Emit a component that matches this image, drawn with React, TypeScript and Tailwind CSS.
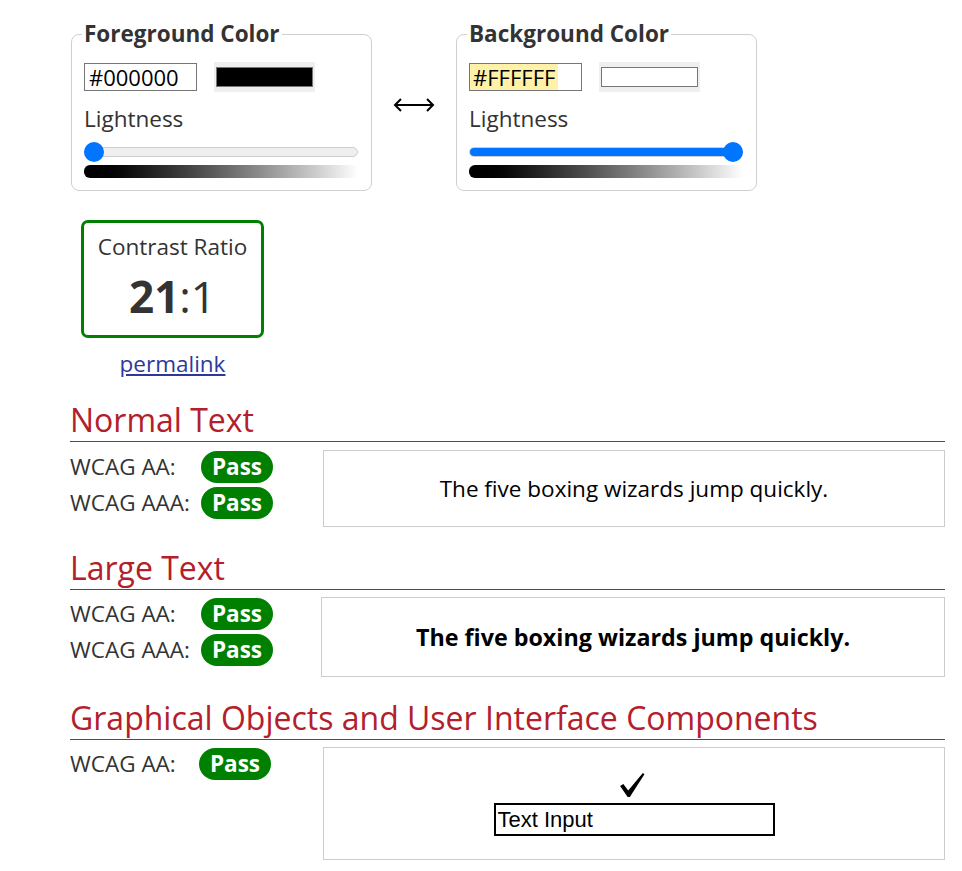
import React from "react";

const font = "font-['Open_Sans',sans-serif]";

const ColorField: React.FC<{
  title: string;
  hex: string;
  swatch: string;
  value: number;
  highlight?: boolean;
}> = ({ title, hex, swatch, value, highlight }) => {
  return (
    <fieldset className="w-[301px] rounded-[8px] border border-[#cfcfcf] pl-[12px] pr-[13px] pb-[12px]">
      <legend className="-ml-[2px] px-[2px] text-[22.5px] leading-[30px] font-bold text-[#333]">
        {title}
      </legend>

      {/* hex + swatch */}
      <div className="mt-[13px] flex items-center h-[30px]">
        <div className="w-[113px] h-[28px] border border-[#767676] text-[22px] leading-[26px] text-black overflow-hidden">
          {highlight ? (
            <span className="inline-block h-[26px] bg-[#fff2a8] px-[3px]">{hex}</span>
          ) : (
            <span className="inline-block pl-[4px]">{hex}</span>
          )}
        </div>
        <div className="ml-[17px] w-[101px] h-[30px] bg-[#efefef] px-[2px] py-[5px]">
          <div className={`h-[20px] w-full border border-[#767676] ${swatch}`} />
        </div>
      </div>

      <div className="mt-[12px] text-[22.5px] leading-[30px] text-[#333]">Lightness</div>

      {/* slider */}
      <div className="relative mt-[8px] h-[20px] flex items-center">
        <div className="h-[10px] w-full rounded-full bg-[#efefef] border border-[#cdcdcd] overflow-hidden">
          <div className="h-full bg-[#0075ff]" style={{ width: `${value}%` }} />
        </div>
        <div
          className="absolute top-0 h-[20px] w-[20px] rounded-full bg-[#0075ff]"
          style={{ left: `calc(${value}% - ${value / 5}px)` }}
        />
      </div>
      <div className="mt-[3px] h-[13px] rounded-[6px] bg-linear-to-r from-black to-white" />
    </fieldset>
  );
};

const PassRow: React.FC<{ label: string; w?: string }> = ({ label, w = "w-[131px]" }) => (
  <div className="flex items-center h-[32px]">
    <div className={`${w} text-[22.5px] text-[#333]`}>{label}</div>
    <div className="w-[72px] h-[32px] rounded-full bg-[#008000] text-white font-bold text-[22.5px] leading-[32px] text-center">
      Pass
    </div>
  </div>
);

const Heading: React.FC<{ children: React.ReactNode }> = ({ children }) => (
  <h2 className="mt-[22px] text-[32px] leading-[38px] pb-[2px] text-[#b3202b] border-b border-[#b3202b]">
    {children}
  </h2>
);

export default function App() {
  return (
    <div className={`${font} min-h-[871px] bg-white pl-[70px] pr-[17px] pt-[19px] text-[#333]`}>
      {/* color pickers */}
      <div className="flex items-center ml-[1px]">
        <ColorField title="Foreground Color" hex="#000000" swatch="bg-black" value={0} />
        <div className="w-[84px] flex justify-center">
          <svg width="42" height="16" viewBox="0 0 42 16" fill="none" stroke="black" strokeWidth="2">
            <path d="M2 8 H40" />
            <path d="M8 2 L2 8 L8 14" />
            <path d="M34 2 L40 8 L34 14" />
          </svg>
        </div>
        <ColorField title="Background Color" hex="#FFFFFF" swatch="bg-white" value={100} highlight />
      </div>

      {/* contrast ratio */}
      <div className="ml-[11px] mt-[29px] w-[183px]">
        <div className="h-[118px] rounded-[7px] border-[3px] border-[#008000] pt-[9px] text-center">
          <div className="text-[22.5px] leading-[30px]">Contrast Ratio</div>
          <div className="mt-[8px] text-[44px] leading-[52px]">
            <span className="font-bold">21</span>:1
          </div>
        </div>
        <div className="mt-[11px] text-center text-[22.5px] leading-[30px]">
          <a href="#" className="text-[#2b3a9a] underline">
            permalink
          </a>
        </div>
      </div>

      {/* normal text */}
      <Heading>Normal Text</Heading>
      <div className="mt-[8px] grid grid-cols-[253px_1fr]">
        <div className="pt-[1px] flex flex-col gap-[4px]">
          <PassRow label="WCAG AA:" />
          <PassRow label="WCAG AAA:" />
        </div>
        <div className="h-[77px] border border-[#cccccc] flex items-center justify-center text-[22.5px] text-black">
          The five boxing wizards jump quickly.
        </div>
      </div>

      {/* large text */}
      <Heading>Large Text</Heading>
      <div className="mt-[7px] grid grid-cols-[251px_1fr]">
        <div className="pt-[1px] flex flex-col gap-[4px]">
          <PassRow label="WCAG AA:" />
          <PassRow label="WCAG AAA:" />
        </div>
        <div className="h-[80px] border border-[#cccccc] flex items-center justify-center text-[23.3px] font-bold text-black">
          The five boxing wizards jump quickly.
        </div>
      </div>

      {/* graphical objects */}
      <Heading>Graphical Objects and User Interface Components</Heading>
      <div className="mt-[7px] grid grid-cols-[253px_1fr]">
        <div className="pt-[1px] flex flex-col">
          <PassRow label="WCAG AA:" w="w-[129px]" />
        </div>
        <div className="h-[113px] border border-[#cccccc] flex flex-col items-center pt-[24px]">
          <svg width="26" height="26" viewBox="0 0 24 24" className="-ml-[4px]">
            <path d="M1 13 L4 11 L8.5 17 L22 1 L23.5 2 L10 23 L8 23 Z" fill="black" />
          </svg>
          <div className="mt-[5px] w-[281px] h-[33px] border-2 border-black px-[2px] font-['Liberation_Sans',Arial,sans-serif] text-[22px] leading-[29px] text-black">
            Text Input
          </div>
        </div>
      </div>
    </div>
  );
}
